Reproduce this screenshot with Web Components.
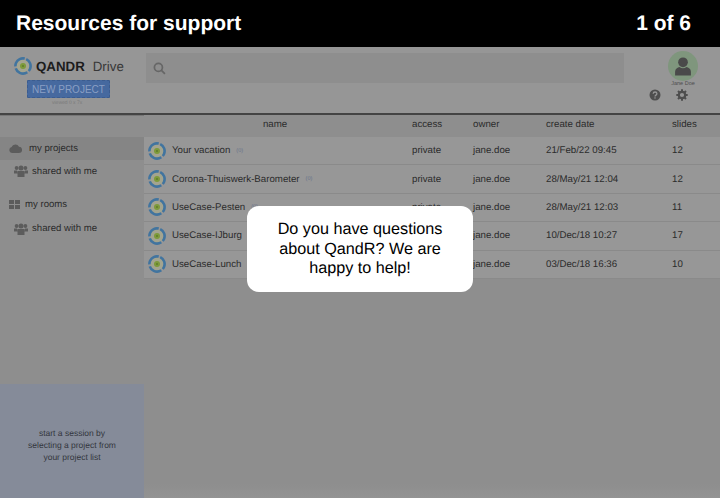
<!DOCTYPE html>
<html lang="en">
<head>
<meta charset="utf-8">
<title>Resources for support</title>
<style>
  html, body { margin: 0; height: 100%; }
  body { font-family: "Liberation Sans", Arial, sans-serif; background: #8e8e8e; overflow: hidden; text-rendering: geometricPrecision; }
  .page { width: 720px; height: 498px; display: flex; flex-direction: column; position: relative; overflow: hidden; }
  .work { flex: 1; display: flex; min-height: 0; }
</style>
</head>
<body>
<div class="page">
  <story-bar>
    <span>Resources for support</span>
    <span slot="count">1 of 6</span>
  </story-bar>
  <drive-header></drive-header>
  <div class="work">
    <side-nav></side-nav>
    <project-table>
      <project-row name="Your vacation" access="private" owner="jane.doe" date="21/Feb/22 09:45" slides="12"></project-row>
      <project-row name="Corona-Thuiswerk-Barometer" access="private" owner="jane.doe" date="28/May/21 12:04" slides="12"></project-row>
      <project-row name="UseCase-Pesten" access="private" owner="jane.doe" date="28/May/21 12:03" slides="11"></project-row>
      <project-row name="UseCase-IJburg" owner="jane.doe" date="10/Dec/18 10:27" slides="17"></project-row>
      <project-row name="UseCase-Lunch" owner="jane.doe" date="03/Dec/18 16:36" slides="10"></project-row>
    </project-table>
  </div>
  <help-bubble>Do you have questions about QandR? We are happy to help!</help-bubble>
</div>

<script>
// qandr ring logo, used in the header and on every row
class QandrLogo extends HTMLElement {
  constructor() {
    super();
    this.attachShadow({ mode: "open" }).innerHTML = `
    <style>
      :host { display: inline-block; width: 18px; height: 18px; flex: none; }
      svg { display: block; width: 100%; height: 100%; }
    </style>
    <svg viewBox="0 0 18 18">
      <circle cx="9" cy="9" r="6.6" fill="#a3a48f"/>
      <circle cx="9" cy="9" r="7.6" fill="none" stroke="#41749f" stroke-width="2.6" stroke-dasharray="14 1.920" transform="rotate(-65 9 9)"/>
      <circle cx="9" cy="9" r="3" fill="#7d9a3a"/>
      <circle cx="9" cy="9" r="1" fill="#5f7a2c"/>
    </svg>`;
  }
}
customElements.define("qandr-logo", QandrLogo);

class StoryBar extends HTMLElement {
  constructor() {
    super();
    this.attachShadow({ mode: "open" }).innerHTML = `
    <style>
      :host {
        display: flex; justify-content: space-between; align-items: center;
        flex: none; height: 47px; box-sizing: border-box; padding: 1px 29px 0 16px;
        background: #000; color: #fff;
        font: 700 21px/24px "Liberation Sans", Arial, sans-serif;
      }
    </style>
    <slot></slot><slot name="count"></slot>`;
  }
}
customElements.define("story-bar", StoryBar);

class DriveHeader extends HTMLElement {
  constructor() {
    super();
    this.attachShadow({ mode: "open" }).innerHTML = `
    <style>
      :host {
        display: grid; grid-template-columns: 146px 478px 1fr;
        flex: none; height: 68px; box-sizing: border-box;
        background: #969696; border-bottom: 2px solid #444;
        box-shadow: 0 1px 0 #777;
        font-family: "Liberation Sans", Arial, sans-serif;
      }
      .brand { display: flex; flex-direction: column; align-items: flex-start; padding: 10px 0 0 14px; }
      .name { display: flex; align-items: center; height: 18px; font-size: 13.300px; color: #1c1c1c; }
      .name qandr-logo { margin-right: 4px; }
      .name b { margin-right: 8px; }
      .name span { color: #383838; }
      button {
        margin: 5px 0 0 13px; width: 83px; height: 18px; padding: 0;
        background: #46699f; color: #8a9fc4;
        border: 1px dashed #3b5c8f; border-radius: 1px;
        font: 10px "Liberation Sans", Arial, sans-serif;
      }
      .viewed { align-self: flex-start; margin: 2px 0 0 38px; font-size: 5px; line-height: 6px; color: #7a7a7a; }
      .search { display: flex; align-items: center; margin-top: 6px; height: 30px; background: #8e8e8e; padding-left: 7px; box-sizing: border-box; }
      .search svg { width: 13px; height: 13px; }
      .user { display: flex; flex-direction: column; align-items: center; }
      .avatar { margin: 4px 0 0 22px; width: 30px; height: 30px; border-radius: 50%; background: #7f967d; display: flex; align-items: center; justify-content: center; }
      .avatar svg { width: 18px; height: 19px; }
      .who { margin-left: 22px; font-size: 5.500px; line-height: 7px; color: #4d4d4d; }
      .tools { display: flex; gap: 15px; margin: 1px 0 0 -7px; }
      .tools svg { display: block; width: 12px; height: 12px; }
    </style>
    <div class="brand">
      <div class="name"><qandr-logo></qandr-logo><b>QANDR</b><span>Drive</span></div>
      <button>NEW PROJECT</button>
      <div class="viewed">viewed 0 x 7x</div>
    </div>
    <div class="search">
      <svg viewBox="0 0 12 12" fill="none" stroke="#666" stroke-width="1.600"><circle cx="5" cy="5" r="3.700"/><path d="M7.800 7.800 11 11"/></svg>
    </div>
    <div class="user">
      <div class="avatar">
        <svg viewBox="0 0 17 18" fill="#4a4a4a"><circle cx="8.500" cy="5" r="4.600"/><path d="M1 17.500v-3.600c0-2.600 2.400-4 4.200-4.400 1 .8 2.100 1.200 3.300 1.200s2.300-.4 3.300-1.200c1.800.4 4.200 1.800 4.200 4.400v3.600z"/></svg>
      </div>
      <div class="who">Jane Doe</div>
      <div class="tools">
        <svg viewBox="0 0 12 12"><circle cx="6" cy="6" r="5.500" fill="#4e4e4e"/><path d="M4.200 4.700c0-2.300 3.700-2.300 3.700 0 0 1.500-1.900 1.400-1.900 2.800" fill="none" stroke="#969696" stroke-width="1.300"/><rect x="5.350" y="8.300" width="1.300" height="1.300" fill="#969696"/></svg>
        <svg viewBox="0 0 12 12"><circle cx="6" cy="6" r="3.200" fill="none" stroke="#4e4e4e" stroke-width="2.200"/><path d="M6 .3v2.200M6 9.500v2.200M.3 6h2.200M9.500 6h2.200M2 2l1.500 1.500M8.500 8.500 10 10M10 2 8.500 3.500M3.500 8.500 2 10" stroke="#4e4e4e" stroke-width="2"/></svg>
      </div>
    </div>`;
  }
}
customElements.define("drive-header", DriveHeader);

const peopleIcon = `<svg width="14" height="12" viewBox="0 0 14 12" fill="#5c5c5c"><circle cx="2.600" cy="3" r="1.900"/><circle cx="11.400" cy="3" r="1.900"/><circle cx="7" cy="3" r="2.500"/><path d="M0 5.500h3l.5 3H0zM14 5.500h-3l-.5 3H14zM3.500 6h7v6h-7z"/></svg>`;

class SideNav extends HTMLElement {
  constructor() {
    super();
    this.attachShadow({ mode: "open" }).innerHTML = `
    <style>
      :host {
        display: flex; flex-direction: column; flex: none; width: 144px;
        font: 9.600px/23px "Liberation Sans", Arial, sans-serif; color: #2b2b2b;
      }
      nav { flex: 1; padding-top: 22px; }
      .item { display: flex; align-items: center; height: 23px; }
      .item.on { background: #858585; padding-left: 9px; gap: 7px; }
      .item.sub { padding-left: 14px; gap: 4px; height: 22px; }
      .item.rooms { padding-left: 9px; gap: 5px; margin-top: 11px; }
      .item.rooms + .sub { height: 25px; }
      .hint {
        flex: none; height: 114px; box-sizing: border-box; padding: 43px 25px 0;
        background: #858b99; color: #33363d;
        text-align: center; font-size: 8.500px; line-height: 12px;
      }
    </style>
    <nav>
      <div class="item on">
        <svg width="13" height="9" viewBox="0 0 13 9" fill="#5c5c5c"><path d="M3 9a3 3 0 0 1-.4-5.900A4 4 0 0 1 10 2.800 3.100 3.100 0 0 1 10 9z"/></svg>
        <span>my projects</span>
      </div>
      <div class="item sub">${peopleIcon}<span>shared with me</span></div>
      <div class="item rooms">
        <svg width="11" height="9" viewBox="0 0 11 9" fill="#5c5c5c"><rect width="5" height="4"/><rect x="6" width="5" height="4"/><rect y="5" width="5" height="4"/><rect x="6" y="5" width="5" height="4"/></svg>
        <span>my rooms</span>
      </div>
      <div class="item sub">${peopleIcon}<span>shared with me</span></div>
    </nav>
    <div class="hint">start a session by selecting a project from your project list</div>`;
  }
}
customElements.define("side-nav", SideNav);

const tableColumns = "268px 61px 73px 126px 1fr";

class ProjectTable extends HTMLElement {
  constructor() {
    super();
    this.attachShadow({ mode: "open" }).innerHTML = `
    <style>
      :host {
        display: block; flex: 1; min-width: 0;
        font: 9.700px "Liberation Sans", Arial, sans-serif; color: #2b2b2b;
        background: linear-gradient(#8e8e8e calc(100% - 14px), #939393);
      }
      .head {
        display: grid; grid-template-columns: ${tableColumns}; align-items: center;
        height: 22px; box-sizing: border-box; padding-bottom: 3px;
      }
      .title { text-align: center; padding-right: 6px; }
    </style>
    <div class="head">
      <span class="title">name</span><span>access</span><span>owner</span><span>create date</span><span>slides</span>
    </div>
    <slot></slot>`;
  }
}
customElements.define("project-table", ProjectTable);

class ProjectRow extends HTMLElement {
  constructor() {
    super();
    const attr = (key) => this.getAttribute(key) || "";
    this.attachShadow({ mode: "open" }).innerHTML = `
    <style>
      :host {
        display: grid; grid-template-columns: ${tableColumns}; align-items: center;
        height: 28.400px; box-sizing: border-box;
        background: #979797; border-bottom: 1px solid #8a8a8a;
      }
      .name { display: flex; align-items: center; padding-left: 4px; gap: 6px; }
      small { font-size: 5.500px; color: #66728a; }
    </style>
    <div class="name"><qandr-logo></qandr-logo><span>${attr("name")}</span><small>(0)</small></div>
    <span>${attr("access")}</span>
    <span>${attr("owner")}</span>
    <span>${attr("date")}</span>
    <span>${attr("slides")}</span>`;
  }
}
customElements.define("project-row", ProjectRow);

class HelpBubble extends HTMLElement {
  constructor() {
    super();
    this.attachShadow({ mode: "open" }).innerHTML = `
    <style>
      :host {
        position: absolute; left: 247px; top: 206px; width: 226px; height: 86px;
        display: flex; align-items: center; justify-content: center; box-sizing: border-box;
        padding: 1px 24px 0; background: #fff; border-radius: 12px; color: #000; text-align: center;
        font: 16.200px/19.500px "Liberation Sans", Arial, sans-serif;
      }
    </style>
    <slot></slot>`;
  }
}
customElements.define("help-bubble", HelpBubble);
</script>
</body>
</html>
